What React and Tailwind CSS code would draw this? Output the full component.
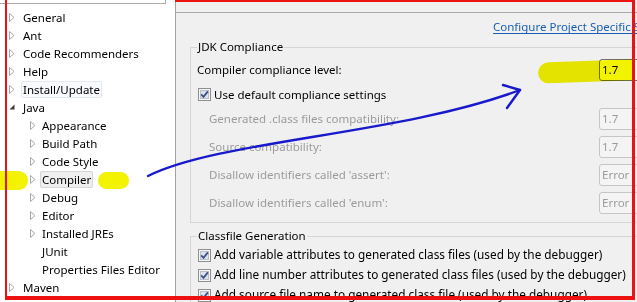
import React from "react";

/* ── TREE DATA ── */
const TREE = [
  { label: "General", level: 1, arrow: "closed" },
  { label: "Ant", level: 1, arrow: "closed" },
  { label: "Code Recommenders", level: 1, arrow: "closed" },
  { label: "Help", level: 1, arrow: "closed" },
  { label: "Install/Update", level: 1, arrow: "closed", hover: true },
  { label: "Java", level: 1, arrow: "open" },
  { label: "Appearance", level: 2, arrow: "closed" },
  { label: "Build Path", level: 2, arrow: "closed" },
  { label: "Code Style", level: 2, arrow: "closed" },
  { label: "Compiler", level: 2, arrow: "closed", selected: true },
  { label: "Debug", level: 2, arrow: "closed" },
  { label: "Editor", level: 2, arrow: "closed" },
  { label: "Installed JREs", level: 2, arrow: "closed" },
  { label: "JUnit", level: 2, arrow: null },
  { label: "Properties Files Editor", level: 2, arrow: null },
  { label: "Maven", level: 1, arrow: "closed" },
];

const Arrow = ({ kind }) => {
  if (kind === "open")
    return (
      <svg width="6" height="6" viewBox="0 0 6 6">
        <path d="M5.5 0.5 L5.5 5.5 L0.5 5.5 Z" fill="#3a3a3a" />
      </svg>
    );
  if (kind === "closed")
    return (
      <svg width="6" height="9" viewBox="0 0 6 9">
        <path d="M0.5 0.5 L5 4.5 L0.5 8.5 Z" fill="#ffffff" stroke="#a8a8a8" />
      </svg>
    );
  return null;
};

const Checkbox = () => (
  <svg width="13" height="13" viewBox="0 0 13 13" className="shrink-0">
    <rect x="0.5" y="0.5" width="12" height="12" fill="#f6f6f6" stroke="#8e8f8f" />
    <rect x="2.5" y="2.5" width="8" height="8" fill="#dde2ea" stroke="#b9c0ca" />
    <path d="M3.2 6.4 L5.5 8.8 L9.9 3.4" fill="none" stroke="#3b5288" strokeWidth="1.8" />
  </svg>
);

const Combo = ({ value, enabled }) => (
  <div
    className={`w-[70px] h-[22px] shrink-0 rounded-[3px] border flex items-center pl-[2px] ${
      enabled ? "border-[#707070] bg-white text-black" : "border-[#c6c6c6] bg-[#f4f4f4] text-[#9b9b9b]"
    }`}
  >
    {value}
  </div>
);

export default function App() {
  return (
    <div className="relative w-[637px] h-[302px] overflow-hidden bg-white flex font-['Noto_Sans',sans-serif] text-[11.5px] text-black">

      {/* ══════════ TREE ══════════ */}
      <div className="w-[176px] shrink-0 h-full border-r border-[#a0a0a0] bg-white">
        <div className="h-[4px] w-[166px] border-b border-r border-[#acacac]" />
        <div className="pt-[4px]">
          {TREE.map((t) => (
            <div
              key={t.label}
              className={`h-[18px] flex items-center ${t.level === 1 ? "pl-[9px]" : "pl-[30px]"}`}
            >
              <div className={`${t.level === 1 ? "w-[14px]" : "w-[12px]"} shrink-0 flex items-center`}>
                <Arrow kind={t.arrow} />
              </div>
              <span
                className={`-ml-[2px] px-[1px] border rounded-[2px] leading-[15px] whitespace-nowrap ${
                  t.selected
                    ? "bg-[#efefef] border-[#d6d6d6]"
                    : t.hover
                    ? "bg-[#f8fafd] border-[#e3e8f0]"
                    : "border-transparent"
                }`}
              >
                {t.label}
              </span>
            </div>
          ))}
        </div>
      </div>

      {/* ══════════ PAGE ══════════ */}
      <div className="flex-1 min-w-0 h-full bg-[#f0f0f0] overflow-hidden">
        <div className="h-[13px] border-b border-[#a9a9a9] overflow-hidden pl-[15px]">
          <div className="-mt-[13px] font-bold leading-[16px]">Compiler</div>
        </div>

        <div className="h-[26px] pt-[2px] flex items-center pl-[317px] whitespace-nowrap">
          <span className="text-[#1a5fb4] underline underline-offset-2">Configure Project Specific Settings...</span>
        </div>

        {/* JDK Compliance */}
        <fieldset className="ml-[14px] w-[480px] border border-[#d5d5d5] px-[6px] pb-[8px]">
          <legend className="px-[1px] leading-[16px]">JDK Compliance</legend>
          <div className="mt-[4px] flex flex-col">
            <div className="h-[22px] flex items-center">
              <span className="w-[402px] shrink-0">Compiler compliance level:</span>
              <Combo value="1.7" enabled />
            </div>
            <div className="h-[27px] flex items-center gap-[3px] pl-[1px]">
              <Checkbox />
              <span>Use default compliance settings</span>
            </div>
            <div className="flex flex-col gap-[6px] text-[#9b9b9b]">
              {[
                ["Generated .class files compatibility:", "1.7"],
                ["Source compatibility:", "1.7"],
                ["Disallow identifiers called 'assert':", "Error"],
                ["Disallow identifiers called 'enum':", "Error"],
              ].map(([l, v]) => (
                <div key={l} className="h-[22px] flex items-center">
                  <span className="w-[402px] shrink-0 pl-[12px]">{l}</span>
                  <Combo value={v} />
                </div>
              ))}
            </div>
          </div>
        </fieldset>

        {/* Classfile Generation */}
        <fieldset className="mt-[5px] ml-[14px] w-[480px] border border-[#d5d5d5] px-[6px] pb-[8px]">
          <legend className="px-[1px] leading-[16px]">Classfile Generation</legend>
          <div className="mt-[1px] flex flex-col text-[11.8px]">
            {[
              "Add variable attributes to generated class files (used by the debugger)",
              "Add line number attributes to generated class files (used by the debugger)",
              "Add source file name to generated class file (used by the debugger)",
            ].map((l) => (
              <div key={l} className="h-[20px] flex items-center gap-[3px] pl-[1px] whitespace-nowrap">
                <Checkbox />
                <span>{l}</span>
              </div>
            ))}
          </div>
        </fieldset>
      </div>

      {/* ══════════ ANNOTATIONS ══════════ */}
      <div className="absolute left-0 top-[171px] w-[28px] h-[19px] rounded-r-full bg-[#f3f200]" />
      <div className="absolute left-[98px] top-[172px] w-[31px] h-[17px] rounded-full bg-[#f3f200]" />
      <div className="absolute left-[538px] top-[61px] w-[96px] h-[21px] rounded-l-full -rotate-[2deg] bg-[#f3f200] mix-blend-multiply" />

      <div className="absolute left-[5px] top-0 w-[2px] h-[299px] bg-[#ee1111]" />
      <div className="absolute left-[175px] top-0 w-[460px] h-[2px] bg-[#ee1111]" />
      <div className="absolute left-[632px] top-0 w-[3px] h-[300px] bg-[#ee1111]" />
      <div className="absolute left-[5px] top-[296px] w-[630px] h-[4px] bg-[#ee1111]" />

      <svg className="absolute inset-0 pointer-events-none" width="637" height="302" viewBox="0 0 637 302">
        <path d="M148 176 C 220 140 400 135 520 90" fill="none" stroke="#1818cc" strokeWidth="2.4" strokeLinecap="round" />
        <path d="M503 85 L520 90 L507 108" fill="none" stroke="#1818cc" strokeWidth="2.4" strokeLinecap="round" strokeLinejoin="round" />
      </svg>
    </div>
  );
}
